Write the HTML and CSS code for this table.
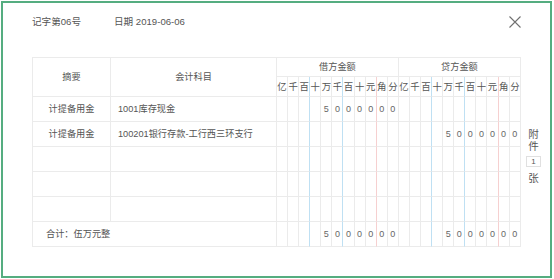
FILE: index.html
```html
<!DOCTYPE html>
<html lang="zh-CN">
<head>
<meta charset="utf-8">
<title>记账凭证</title>
<link rel="stylesheet" href="styles.css">
</head>
<body>
<div class="modal">
  <div class="modal-header">
    <span class="voucher-no">记字第06号</span>
    <span class="voucher-date">日期 2019-06-06</span>
    <button class="close" aria-label="关闭">
      <svg width="12" height="12" viewBox="0 0 12 12"><path d="M0.5 0.5 L11.5 11.5 M11.5 0.5 L0.5 11.5" stroke="#707070" stroke-width="1.1" fill="none"/></svg>
    </button>
  </div>
  <div class="modal-body">
    <table class="voucher">
      <colgroup>
        <col class="c-sum"><col class="c-acct">
        <col><col><col><col><col><col><col><col><col><col><col>
        <col><col><col><col><col><col><col><col><col><col><col>
      </colgroup>
      <thead>
        <tr class="h1">
          <th rowspan="2">摘要</th>
          <th rowspan="2">会计科目</th>
          <th colspan="11">借方金额</th>
          <th colspan="11">贷方金额</th>
        </tr>
        <tr class="h2">
          <th>亿</th><th>千</th><th class="b">百</th><th>十</th><th>万</th><th class="b">千</th><th>百</th><th>十</th><th class="r">元</th><th>角</th><th>分</th>
          <th>亿</th><th>千</th><th class="b">百</th><th>十</th><th>万</th><th class="b">千</th><th>百</th><th>十</th><th class="r">元</th><th>角</th><th>分</th>
        </tr>
      </thead>
      <tbody>
        <tr class="row">
          <td class="sum">计提备用金</td><td class="acct">1001库存现金</td>
          <td></td><td></td><td class="b"></td><td></td><td class="n">5</td><td class="b n">0</td><td class="n">0</td><td class="n">0</td><td class="r n">0</td><td class="n">0</td><td class="n">0</td>
          <td></td><td></td><td class="b"></td><td></td><td></td><td class="b"></td><td></td><td></td><td class="r"></td><td></td><td></td>
        </tr>
        <tr class="row">
          <td class="sum">计提备用金</td><td class="acct">100201银行存款-工行西三环支行</td>
          <td></td><td></td><td class="b"></td><td></td><td></td><td class="b"></td><td></td><td></td><td class="r"></td><td></td><td></td>
          <td></td><td></td><td class="b"></td><td></td><td class="n">5</td><td class="b n">0</td><td class="n">0</td><td class="n">0</td><td class="r n">0</td><td class="n">0</td><td class="n">0</td>
        </tr>
        <tr class="row">
          <td class="sum"></td><td class="acct"></td>
          <td></td><td></td><td class="b"></td><td></td><td></td><td class="b"></td><td></td><td></td><td class="r"></td><td></td><td></td>
          <td></td><td></td><td class="b"></td><td></td><td></td><td class="b"></td><td></td><td></td><td class="r"></td><td></td><td></td>
        </tr>
        <tr class="row">
          <td class="sum"></td><td class="acct"></td>
          <td></td><td></td><td class="b"></td><td></td><td></td><td class="b"></td><td></td><td></td><td class="r"></td><td></td><td></td>
          <td></td><td></td><td class="b"></td><td></td><td></td><td class="b"></td><td></td><td></td><td class="r"></td><td></td><td></td>
        </tr>
        <tr class="row">
          <td class="sum"></td><td class="acct"></td>
          <td></td><td></td><td class="b"></td><td></td><td></td><td class="b"></td><td></td><td></td><td class="r"></td><td></td><td></td>
          <td></td><td></td><td class="b"></td><td></td><td></td><td class="b"></td><td></td><td></td><td class="r"></td><td></td><td></td>
        </tr>
        <tr class="row total">
          <td class="total-label" colspan="2">合计：伍万元整</td>
          <td></td><td></td><td class="b"></td><td></td><td class="n">5</td><td class="b n">0</td><td class="n">0</td><td class="n">0</td><td class="r n">0</td><td class="n">0</td><td class="n">0</td>
          <td></td><td></td><td class="b"></td><td></td><td class="n">5</td><td class="b n">0</td><td class="n">0</td><td class="n">0</td><td class="r n">0</td><td class="n">0</td><td class="n">0</td>
        </tr>
      </tbody>
    </table>
    <div class="attach">
      <span class="attach-label">附</span>
      <span class="attach-label">件</span>
      <span class="attach-count">1</span>
      <span class="attach-label attach-unit">张</span>
    </div>
  </div>
</div>
</body>
</html>
```

FILE: styles.css
```css
html, body {
  margin: 0;
  padding: 0;
  background: #ffffff;
}

body {
  font-family: "Liberation Sans", "Noto Sans CJK SC", sans-serif;
  color: #555555;
}

.modal {
  box-sizing: border-box;
  margin: 1px 0 0 1px;
  width: 551px;
  height: 277px;
  border: 2px solid #55ad80;
  background: #ffffff;
  padding: 12px 0 0 29px;
}

.modal-header {
  display: flex;
  align-items: center;
  width: 489px;
  height: 13px;
  font-size: 9.6px;
  line-height: 13px;
}

.voucher-no {
  width: 82px;
}

.close {
  margin-left: auto;
  width: 12px;
  height: 12px;
  padding: 0;
  border: 0;
  background: none;
  display: flex;
}

.modal-body {
  display: flex;
  align-items: flex-start;
  margin-top: 29px;
}

.voucher {
  table-layout: fixed;
  border-collapse: separate;
  border-spacing: 0;
  width: 489px;
  border-top: 1px solid #ebebeb;
  border-left: 1px solid #ebebeb;
  font-size: 9.2px;
  color: #555555;
}

.c-sum { width: 78px; }
.c-acct { width: 166px; }

.voucher th,
.voucher td {
  box-sizing: border-box;
  padding: 0;
  border-right: 1px solid #ebebeb;
  border-bottom: 1px solid #ebebeb;
  font-weight: normal;
  text-align: center;
  line-height: 12px;
  overflow: hidden;
  white-space: nowrap;
}

.voucher .b { border-right-color: #bfe0f3; }
.voucher .r { border-right-color: #f6d0d0; }

.h1 { height: 19px; }
.h2 { height: 20px; }
.h2 th { font-size: 9.4px; }
.row { height: 25px; }

.voucher td.acct {
  text-align: left;
  padding-left: 7px;
}

.voucher td.n {
  font-size: 9px;
  color: #666666;
}

.voucher td.total-label {
  text-align: left;
  padding-left: 13px;
}

.attach {
  display: flex;
  flex-direction: column;
  align-items: center;
  width: 15px;
  margin-left: 5px;
  padding-top: 71px;
  font-size: 10.5px;
  line-height: 12px;
  color: #555555;
}

.attach-count {
  box-sizing: border-box;
  width: 15px;
  height: 11px;
  margin-top: 4px;
  border: 1px solid #e0e0e0;
  font-size: 8px;
  line-height: 9px;
  text-align: center;
}

.attach-unit {
  margin-top: 5px;
}
```
